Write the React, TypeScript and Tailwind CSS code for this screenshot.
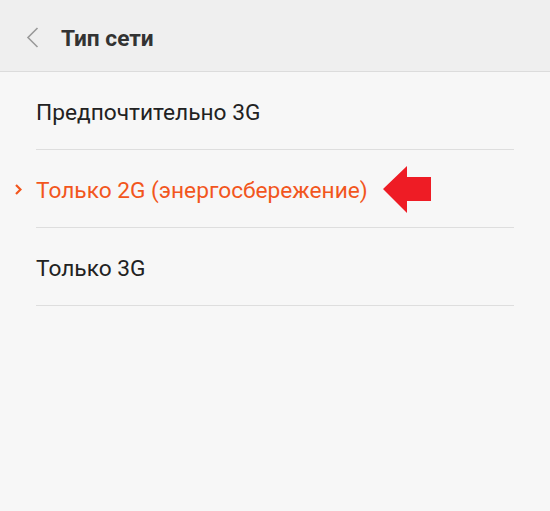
const items = [
  { label: 'Предпочтительно 3G', active: false },
  { label: 'Только 2G (энергосбережение)', active: true },
  { label: 'Только 3G', active: false },
];

export default function App() {
  return (
    <main className="w-[550px] h-[511px] bg-[#f7f7f7] font-['Roboto',sans-serif]">
      <header className="h-[72px] bg-[#efefef] border-b border-[#dcdcdc] flex items-center">
        <svg className="ml-[26px] mt-[3px] w-[13px] h-[21px]" viewBox="0 0 13 21" fill="none">
          <path d="M11.5 1 L2 10.5 L11.5 20" stroke="#9a9a9a" strokeWidth="1.6" />
        </svg>
        <h1 className="ml-[22px] pt-[8px] text-[22.7px] font-bold text-[#333333]">Тип сети</h1>
      </header>
      <ul className="pl-[36px] pr-[36px]">
        {items.map((item) => (
          <li
            key={item.label}
            className="relative h-[78px] flex items-center border-b border-[#dedede]"
          >
            {item.active && (
              <svg className="absolute left-[-21px] mt-[2px] w-[7px] h-[11px]" viewBox="0 0 7 11" fill="none">
                <path d="M1 1 L5.5 5.5 L1 10" stroke="#f2561d" strokeWidth="2.2" />
              </svg>
            )}
            <span
              className={
                'pt-[6px] text-[22.7px] ' + (item.active ? 'text-[#f2561d]' : 'text-[#222222]')
              }
            >
              {item.label}
            </span>
            {item.active && (
              <svg className="ml-[15px] mt-[2px] w-[48px] h-[48px]" viewBox="0 0 48 48">
                <polygon points="0,23 24,0 24,11 48,11 48,35 24,35 24,47" fill="#ee1c25" />
              </svg>
            )}
          </li>
        ))}
      </ul>
    </main>
  );
}
